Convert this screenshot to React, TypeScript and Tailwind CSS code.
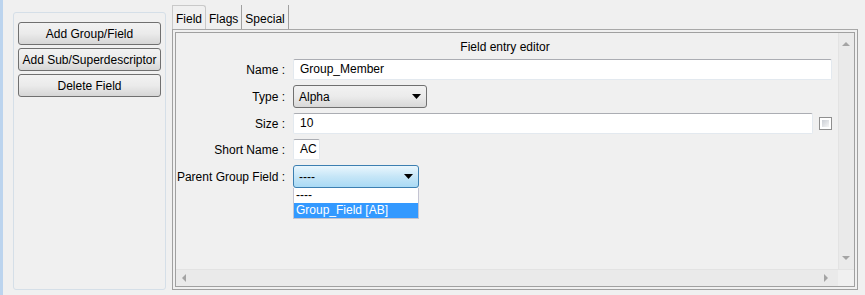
import React from "react";

const font = { fontFamily: '"Liberation Sans", Arial, sans-serif' };

const Btn: React.FC<{ label: string }> = ({ label }) => (
  <button className="h-[23px] w-full whitespace-nowrap rounded-[3px] border border-[#707070] bg-gradient-to-b from-[#f2f2f2] via-[#ebebeb] to-[#d6d6d6] text-[12px] leading-none text-black">
    {label}
  </button>
);

const Arrow: React.FC<{ dir: "up" | "down" | "left" | "right" }> = ({ dir }) => {
  const pts = {
    up: "0,5 4,1 8,5",
    down: "0,1 4,5 8,1",
    left: "5,0 1,4 5,8",
    right: "1,0 5,4 1,8",
  }[dir];
  const vertical = dir === "up" || dir === "down";
  return (
    <svg width={vertical ? 9 : 6} height={vertical ? 6 : 9} viewBox={vertical ? "0 0 9 6" : "0 0 6 9"}>
      <polygon points={pts} fill="#a4a4a4" />
    </svg>
  );
};

const Caret = () => (
  <svg width="9" height="5" viewBox="0 0 9 5">
    <polygon points="0,0 9,0 4.5,5" fill="#000" />
  </svg>
);

const Label: React.FC<{ text: string }> = ({ text }) => (
  <div className="flex w-[108px] shrink-0 items-center justify-end whitespace-nowrap pr-[1px] text-[12px] text-black">
    {text}
  </div>
);

const textField = "h-[21px] whitespace-nowrap rounded-[2px] border border-[#e3e9ef] border-t-[#abadb3] bg-white pl-[6px] text-[12px] leading-[19px] text-black";

export default function App() {
  return (
    <div style={font} className="flex h-[295px] w-[865px] bg-[#f0f0f0]">
      <div className="w-[3px] bg-[#bcd4ee]" />

      {/* left button panel */}
      <div className="ml-[10px] mt-[12px] mb-[5px] flex w-[153px] flex-col gap-[3px] rounded-[3px] border border-[#d5dfe8] px-[4px] pt-[9px]">
        <Btn label="Add Group/Field" />
        <Btn label="Add Sub/Superdescriptor" />
        <Btn label="Delete Field" />
      </div>

      {/* tabbed area */}
      <div className="ml-[6px] mt-[5px] mb-[5px] flex w-[686px] flex-col">
        <div className="flex h-[24px] items-stretch text-[12px] text-black">
          <div className="rounded-tr-[3px] border-x border-t border-[#c9c9c9] px-[3px] pt-[4px]">Field</div>
          <div className="border-r border-[#a0a0a0] px-[3px] pt-[5px]">Flags</div>
          <div className="border-r border-[#a0a0a0] px-[3px] pt-[5px]">Special</div>
        </div>

        <div className="flex flex-1 flex-col border border-[#a0a0a0] border-t-[#a8a8a8] bg-[#f0f0f0] p-[2px]">
          <div className="flex flex-1 flex-col border border-[#a0a0a0] bg-white">
            <div className="flex flex-1">
              {/* content */}
              <div className="flex flex-1 flex-col bg-[#f0f0f0] pl-[2px] pr-[6px] pt-[6px]">
                <div className="text-center text-[12px] leading-[16px] text-black">Field entry editor</div>

                <div className="mt-[4px] flex flex-col gap-[5px]">
                  <div className="flex h-[21px] gap-[7px]">
                    <Label text="Name :" />
                    <div className={`${textField} flex-1`}>Group_Member</div>
                  </div>

                  <div className="flex h-[23px] gap-[7px]">
                    <Label text="Type :" />
                    <div className="flex w-[134px] items-center justify-between rounded-[3px] border border-[#707070] bg-gradient-to-b from-[#f2f2f2] via-[#ebebeb] to-[#d8d8d8] pl-[5px] pr-[5px] text-[12px] text-black">
                      <span>Alpha</span>
                      <Caret />
                    </div>
                  </div>

                  <div className="flex h-[21px] gap-[7px]">
                    <Label text="Size :" />
                    <div className="flex flex-1 items-center gap-[6px]">
                      <div className={`${textField} flex-1`}>10</div>
                      <div className="h-[13px] w-[13px] border border-[#8f8f8f] bg-white p-[2px]">
                        <div className="h-full w-full bg-gradient-to-br from-[#cbcfd5] to-[#f6f6f6]" />
                      </div>
                    </div>
                  </div>

                  <div className="flex h-[21px] gap-[7px]">
                    <Label text="Short Name :" />
                    <div className={`${textField} w-[27px] pl-[4px]`}>AC</div>
                  </div>

                  <div className="flex h-[23px] gap-[7px]">
                    <Label text="Parent Group Field :" />
                    <div className="relative w-[126px]">
                      <div className="flex h-full items-center justify-between rounded-[3px] border border-[#3c7fb1] bg-gradient-to-b from-[#eaf6fd] via-[#c6e6f7] to-[#a9daf5] pl-[5px] pr-[5px] text-[12px] text-black">
                        <span>----</span>
                        <Caret />
                      </div>
                      <div className="absolute left-0 top-[23px] w-[126px] border border-[#c4c4d2] border-t-0 bg-white text-[12px] leading-[15px]">
                        <div className="pl-[2px] text-black">----</div>
                        <div className="bg-[#3399ff] pl-[2px] text-white">Group_Field [AB]</div>
                      </div>
                    </div>
                  </div>
                </div>
              </div>

              {/* vertical scrollbar */}
              <div className="flex w-[16px] flex-col items-center justify-between border-l border-[#e3e3e3] bg-[#eaeaea] py-[8px]">
                <Arrow dir="up" />
                <Arrow dir="down" />
              </div>
            </div>

            {/* horizontal scrollbar */}
            <div className="flex h-[17px] border-t border-[#e3e3e3] bg-white">
              <div className="flex flex-1 items-center justify-between bg-[#eaeaea] pl-[5px] pr-[9px]">
                <Arrow dir="left" />
                <Arrow dir="right" />
              </div>
              <div className="w-[16px] bg-[#f0f0f0]" />
            </div>
          </div>
        </div>
      </div>
    </div>
  );
}
